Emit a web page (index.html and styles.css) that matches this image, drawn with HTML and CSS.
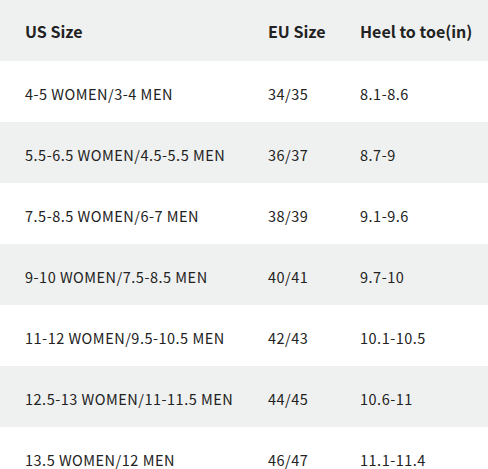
FILE: index.html
```html
<!DOCTYPE html>
<html lang="en">
  <head>
    <meta charset="UTF-8" />
    <meta name="viewport" content="width=device-width, initial-scale=1.0" />
    <title>Size Chart</title>
    <link rel="stylesheet" href="styles.css">
  </head>
  <body>
    <div class="size-chart">
      <div class="row head">
        <span>US Size</span>
        <span>EU Size</span>
        <span>Heel to toe(in)</span>
      </div>
      <div class="row">
        <span>4-5 WOMEN/3-4 MEN</span>
        <span>34/35</span>
        <span>8.1-8.6</span>
      </div>
      <div class="row">
        <span>5.5-6.5 WOMEN/4.5-5.5 MEN</span>
        <span>36/37</span>
        <span>8.7-9</span>
      </div>
      <div class="row">
        <span>7.5-8.5 WOMEN/6-7 MEN</span>
        <span>38/39</span>
        <span>9.1-9.6</span>
      </div>
      <div class="row">
        <span>9-10 WOMEN/7.5-8.5 MEN</span>
        <span>40/41</span>
        <span>9.7-10</span>
      </div>
      <div class="row">
        <span>11-12 WOMEN/9.5-10.5 MEN</span>
        <span>42/43</span>
        <span>10.1-10.5</span>
      </div>
      <div class="row">
        <span>12.5-13 WOMEN/11-11.5 MEN</span>
        <span>44/45</span>
        <span>10.6-11</span>
      </div>
      <div class="row">
        <span>13.5 WOMEN/12 MEN</span>
        <span>46/47</span>
        <span>11.1-11.4</span>
      </div>
    </div>
  </body>
</html>
```

FILE: styles.css
```css
body {
  margin: 0;
  background: #ffffff;
  font-family: "Noto Sans CJK SC", "Noto Sans", sans-serif;
  color: #222222;
}

.size-chart {
  width: 488px;
}

.row {
  display: grid;
  grid-template-columns: 243px 92px auto;
  align-items: center;
  height: 61px;
  padding-left: 25px;
  font-size: 14.5px;
  letter-spacing: 0.5px;
}

.row:nth-child(odd) {
  background: #eff1f0;
}

.row span {
  padding-top: 4px;
}

.head {
  font-size: 16px;
  font-weight: bold;
  letter-spacing: 0;
}

.head span {
  padding-top: 0;
}
```
